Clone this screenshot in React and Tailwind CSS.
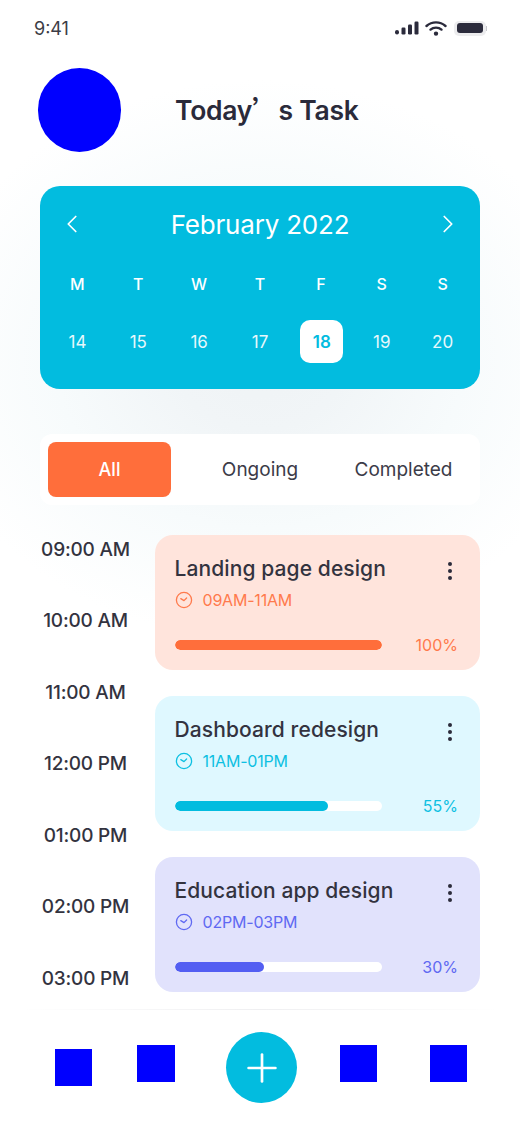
import { Plus, ChevronLeft, ChevronRight } from "lucide-react";

const days = ["M", "T", "W", "T", "F", "S", "S"];
const dates = [14, 15, 16, 17, 18, 19, 20];
const times = ["09:00 AM", "10:00 AM", "11:00 AM", "12:00 PM", "01:00 PM", "02:00 PM", "03:00 PM"];

function ClockIcon({ className }) {
  return (
    <svg viewBox="0 0 18 18" fill="none" stroke="currentColor" strokeWidth="1.3" strokeLinecap="round" strokeLinejoin="round" className={className}>
      <circle cx="9" cy="9" r="7.6" />
      <path d="M5.8 7.6 L9 9.6 L11.6 7" />
    </svg>
  );
}

function TaskCard({ title, time, percent, bg, text, pctClass }) {
  return (
    <div className={`h-[135px] rounded-[18px] pl-5 pr-[22px] pt-[20px] ${bg}`}>
      <div className="flex items-start justify-between">
        <div className="text-[21px] leading-[28px] font-medium tracking-[0.1px] text-[#33333f]">{title}</div>
        <div className="flex flex-col gap-[3px] pt-[7px] pr-[6px]">
          <span className="w-[4px] h-[4px] rounded-full bg-[#2b2b3a]" />
          <span className="w-[4px] h-[4px] rounded-full bg-[#2b2b3a]" />
          <span className="w-[4px] h-[4px] rounded-full bg-[#2b2b3a]" />
        </div>
      </div>
      <div className={`flex items-center gap-[10px] mt-[6px] ${text}`}>
        <ClockIcon className="w-[18px] h-[18px]" />
        <span className="text-[16px] leading-[22px] tracking-[-0.2px]">{time}</span>
      </div>
      <div className="flex items-center justify-between mt-[22px]">
        <div className="w-[207px] h-[10px] rounded-full bg-white overflow-hidden">
          <div className={`h-full rounded-full ${pctClass}`} />
        </div>
        <span className={`text-[16px] leading-[24px] ${text}`}>{percent}</span>
      </div>
    </div>
  );
}

export default function App() {
  return (
    <div className="w-[520px] h-[1125px] overflow-hidden flex flex-col font-['Inter','Liberation_Sans',sans-serif] text-[#2a2a3a] bg-[radial-gradient(ellipse_340px_280px_at_260px_360px,#eff3f5_0%,#f1f5f7_25%,#f7fbfc_60%,#ffffff_100%)]">
      {/* status bar */}
      <div className="flex items-center justify-between h-[56px] pl-[34px] pr-[33px]">
        <span className="text-[18px] text-[#3c3c46]">9:41</span>
        <div className="flex items-center gap-[6px]">
          <svg width="24" height="14" viewBox="0 0 24 14" fill="#2b2b3c">
            <rect x="0" y="9" width="4" height="4.5" rx="2" />
            <rect x="6.5" y="6.5" width="4" height="7" rx="1.2" />
            <rect x="13" y="3.5" width="4" height="10" rx="1.2" />
            <rect x="19.5" y="0.5" width="4" height="13" rx="1.2" />
          </svg>
          <svg width="22" height="15" viewBox="0 0 22 15" fill="none" stroke="#2b2b3c" strokeWidth="2.4" strokeLinecap="round">
            <path d="M1.5 5 C7 0.2 15 0.2 20.5 5" />
            <path d="M5.5 8.6 C8.5 6 13.5 6 16.5 8.6" />
            <circle cx="11" cy="12.6" r="1" fill="#2b2b3c" />
          </svg>
          <div className="flex items-center ml-[1px]">
            <div className="w-[32px] h-[15px] rounded-[5px] bg-[#ececee] flex items-center justify-center">
              <div className="w-[26px] h-[10px] rounded-[3px] bg-[#2b2b3c]" />
            </div>
            <div className="w-[1px] h-[5px] bg-[#c8c8cc]" />
          </div>
        </div>
      </div>

      {/* header */}
      <div className="flex items-center h-[84px] mt-[12px] pl-[38px]">
        <div className="w-[83px] h-[84px] rounded-full bg-[#0000ff]" />
        <div className="ml-[54px] text-[26.5px] font-semibold tracking-[-0.25px] text-[#2a2a3a]">
          Today<span className="font-['Noto_Sans_CJK_SC']">’</span>s Task
        </div>
      </div>

      {/* calendar */}
      <div className="mx-[40px] mt-[34px] h-[203px] rounded-[20px] bg-[#02bcdf] text-white px-[7px] pt-[19px]">
        <div className="flex items-center justify-between h-[38px] px-[10px]">
          <ChevronLeft className="w-[30px] h-[30px]" strokeWidth={1.4} />
          <span className="text-[26px] tracking-[-0.2px]">February 2022</span>
          <ChevronRight className="w-[30px] h-[30px]" strokeWidth={1.4} />
        </div>
        <div className="grid grid-cols-7 mt-[29px] text-center text-[16px] font-medium leading-[24px]">
          {days.map((d, i) => (
            <span key={i}>{d}</span>
          ))}
        </div>
        <div className="grid grid-cols-7 mt-[24px] text-center text-[17px] leading-[44px]">
          {dates.map((d) =>
            d === 18 ? (
              <div key={d} className="w-[43px] h-[43px] mx-auto translate-x-px rounded-[10px] bg-white text-[#02bcdf] font-semibold">
                {d}
              </div>
            ) : (
              <span key={d} className="opacity-90">{d}</span>
            )
          )}
        </div>
      </div>

      {/* tabs */}
      <div className="mx-[40px] mt-[45px] h-[71px] rounded-[12px] bg-white flex items-center pl-[8px] text-[19px] text-[#3b3b48]">
        <div className="w-[123px] h-[55px] rounded-[8px] bg-[#ff6e3b] text-white text-[18px] font-medium flex items-center justify-center">All</div>
        <span className="w-[178px] text-center pt-[1px]">Ongoing</span>
        <span className="w-[109px] text-center pt-[1px] whitespace-nowrap">Completed</span>
      </div>

      {/* schedule */}
      <div className="flex mt-[30px] px-[40px] h-[457px]">
        <div className="w-[114.5px] shrink-0 flex flex-col gap-[43.5px] pt-[0.5px]">
          {times.map((t) => (
            <div key={t} className="w-[91px] text-center text-[19px] leading-[28px] font-medium tracking-[-0.2px] whitespace-nowrap text-[#33333f]">
              {t}
            </div>
          ))}
        </div>
        <div className="flex-1 flex flex-col gap-[26px]">
          <TaskCard title="Landing page design" time="09AM-11AM" percent="100%" bg="bg-[#ffe4dc]" text="text-[#ff7a4c]" pctClass="w-full bg-[#ff6e3b]" />
          <TaskCard title="Dashboard redesign" time="11AM-01PM" percent="55%" bg="bg-[#dff8ff]" text="text-[#0dc0e2]" pctClass="w-[74%] bg-[#02bcdf]" />
          <TaskCard title="Education app design" time="02PM-03PM" percent="30%" bg="bg-[#e1e2fc]" text="text-[#5f69f2]" pctClass="w-[43%] bg-[#535ef2]" />
        </div>
      </div>

      {/* bottom nav */}
      <div className="h-[1px] mt-[17px] mx-[20px] bg-gradient-to-r from-transparent via-[#efeff1] to-transparent" />
      <div className="flex items-start pl-[55px]">
        <div className="w-[37px] h-[37px] mt-[39px] bg-[#0000ff]" />
        <div className="w-[38px] h-[37px] mt-[35px] ml-[45px] bg-[#0000ff]" />
        <div className="w-[71px] h-[71px] mt-[22px] ml-[51px] rounded-full bg-[#02bcdf] text-white flex items-center justify-center">
          <Plus className="w-[46px] h-[46px]" strokeWidth={1.4} />
        </div>
        <div className="w-[37px] h-[37px] mt-[35px] ml-[43px] bg-[#0000ff]" />
        <div className="w-[37px] h-[37px] mt-[35px] ml-[53px] bg-[#0000ff]" />
      </div>
    </div>
  );
}
